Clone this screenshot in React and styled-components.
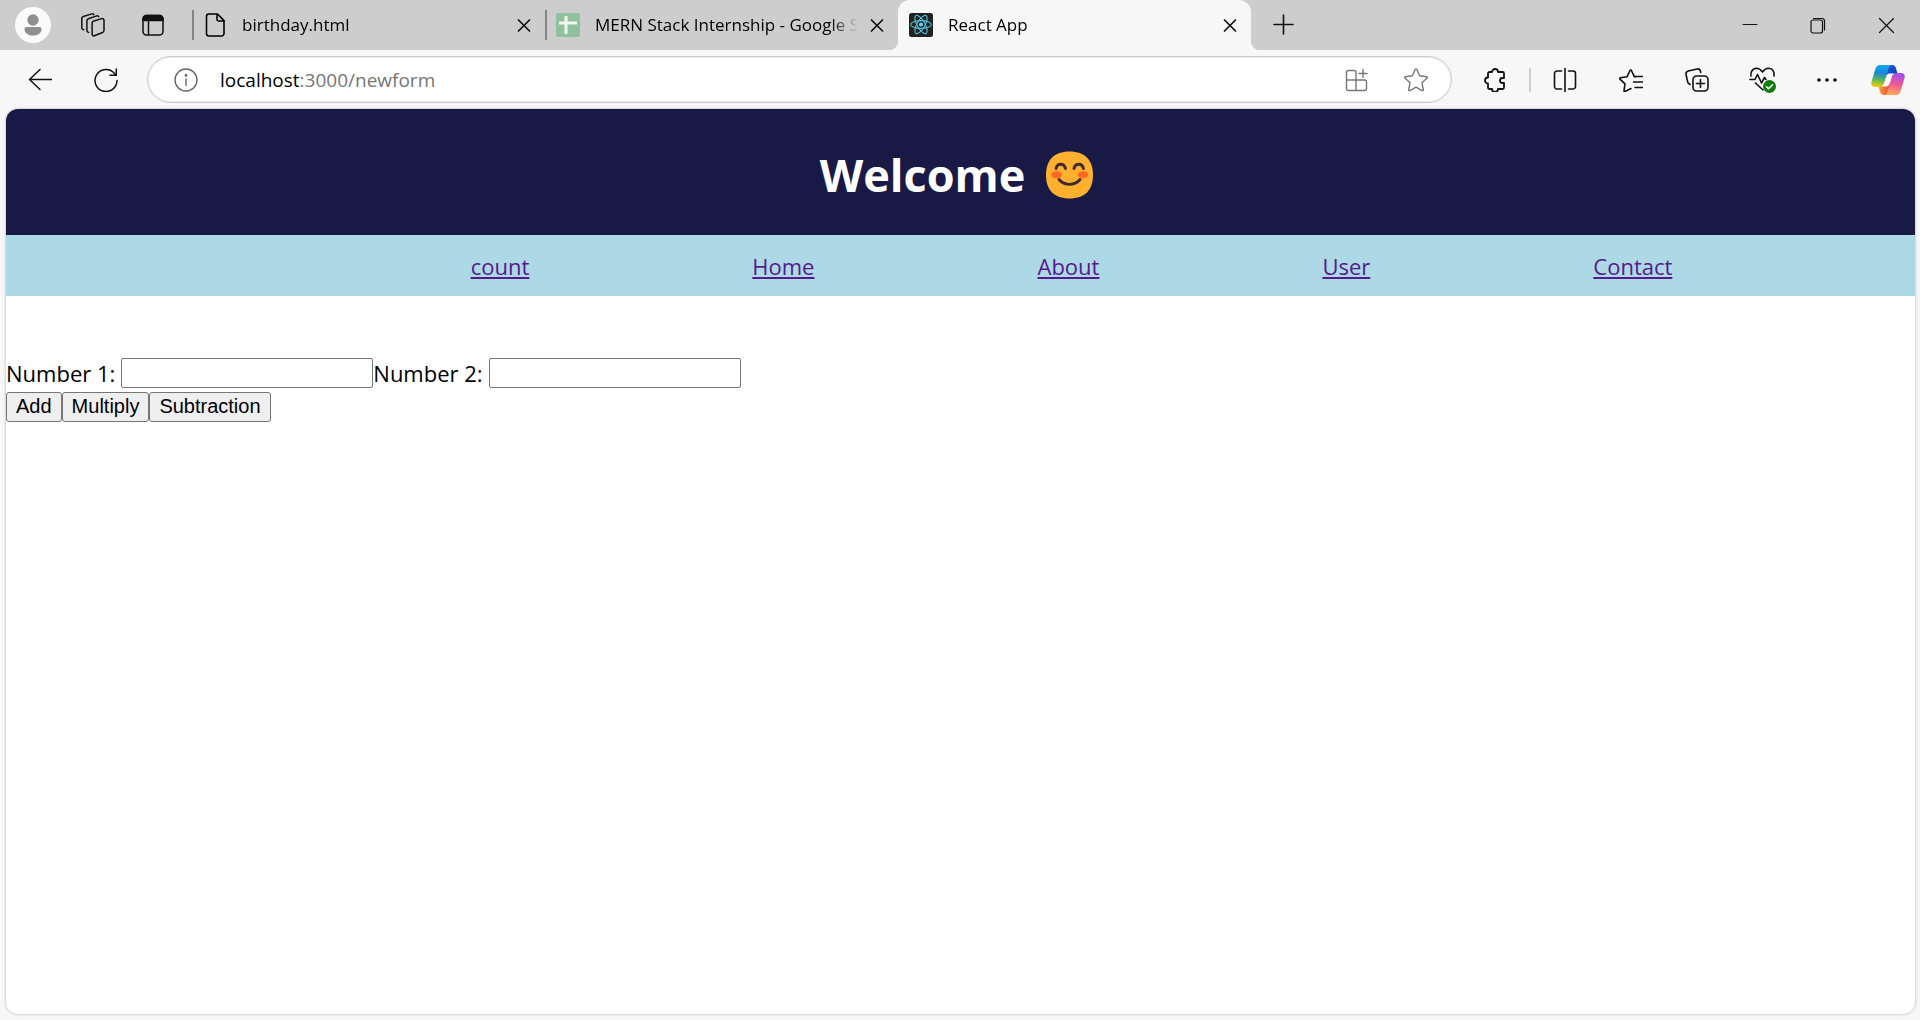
import React, { useState } from "react";
import styled, { createGlobalStyle, css } from "styled-components";

const uiFont = '"Segoe UI", "Open Sans", "Noto Sans", sans-serif';

const GlobalStyle = createGlobalStyle`
  * { box-sizing: border-box; }
  body { margin: 0; background: #f7f7f7; font-family: ${uiFont}; color: #000; }
  button, input { font-family: inherit; }
`;

const Window = styled.div`
  display: flex;
  flex-direction: column;
  min-height: 100vh;
  background: #f7f7f7;
`;

const TabStrip = styled.div`
  display: flex;
  height: 50px;
  padding-left: 3px;
  background: #cdcdcd;
`;

const IconButton = styled.button`
  display: flex;
  flex: none;
  align-items: center;
  justify-content: center;
  width: ${(p) => p.$width || 66}px;
  height: 50px;
  padding: 0;
  border: 0;
  background: none;
  color: ${(p) => p.$color || "#111"};
`;

const Tabs = styled.div`
  display: flex;
  flex: 0 1 1059px;
  min-width: 0;
  margin-left: 9px;
`;

const Tab = styled.div`
  position: relative;
  display: flex;
  flex: 1 1 0;
  align-items: center;
  min-width: 0;
  padding-right: 9px;
  ${(p) =>
    p.$active &&
    css`
      background: #f7f7f7;
      border-radius: 12px 12px 0 0;
      &::before,
      &::after {
        content: "";
        position: absolute;
        bottom: 0;
        width: 10px;
        height: 10px;
      }
      &::before {
        left: -10px;
        background: radial-gradient(circle at 0 0, transparent 10px, #f7f7f7 11px);
      }
      &::after {
        right: -10px;
        background: radial-gradient(circle at 100% 0, transparent 10px, #f7f7f7 11px);
      }
    `}
`;

const TabRule = styled.span`
  flex: none;
  width: 2px;
  height: 30px;
  background: ${(p) => (p.$hidden ? "transparent" : "#858585")};
`;

const TabIcon = styled.span`
  display: flex;
  flex: none;
  margin: 0 15px 0 9px;
`;

const TabTitle = styled.span`
  flex: 1;
  min-width: 0;
  margin-right: 7px;
  overflow: hidden;
  font-size: 17px;
  line-height: 50px;
  white-space: nowrap;
  mask-image: linear-gradient(to right, #000 calc(100% - 28px), transparent);
`;

const WindowControls = styled.div`
  display: flex;
  margin-left: auto;
`;

const Toolbar = styled.div`
  display: flex;
  align-items: center;
  height: 59px;
  padding: 0 2px 0 7px;
`;

const AddressBar = styled.div`
  display: flex;
  flex: 1;
  align-items: center;
  min-width: 0;
  height: 47px;
  margin: 0 10px 0 8px;
  padding: 0 6px 0 26px;
  border: 1px solid #cbcbcb;
  border-radius: 24px;
  background: #fff;
  box-shadow: inset 0 0 0 1px #ececec;
`;

const Address = styled.span`
  flex: 1;
  margin-left: 22px;
  font-size: 19px;
  line-height: 28px;
  color: #767676;
`;

const Host = styled.span`
  color: #000;
`;

const ToolRule = styled.span`
  width: 2px;
  height: 24px;
  margin: 0 1px;
  background: #cfcfcf;
`;

const Page = styled.main`
  flex: 1;
  margin: 0 5px 6px 6px;
  overflow: hidden;
  border-radius: 12px;
  background: #fff;
  box-shadow: 0 0 3px rgba(0, 0, 0, 0.3);
`;

const Banner = styled.header`
  display: flex;
  align-items: center;
  justify-content: center;
  height: 126px;
  padding-top: 6px;
  background: #191946;
  color: #fff;
`;

const Welcome = styled.h1`
  display: flex;
  align-items: center;
  gap: 14px;
  margin: 0;
  font-size: 45px;
  line-height: 64px;
  font-weight: 700;
`;

const NavList = styled.ul`
  display: flex;
  justify-content: center;
  gap: 223px;
  margin: 0;
  padding: 15px 0 14px 222px;
  list-style: none;
  background: #add8e6;
`;

const NavLink = styled.a`
  display: block;
  font-size: 22px;
  line-height: 32px;
  color: #551a8b;
  text-decoration: underline;
  text-decoration-thickness: 2px;
  text-underline-offset: 2px;
`;

const Form = styled.form`
  padding-top: 60px;
`;

const Row = styled.div`
  display: flex;
  align-items: flex-start;
  height: 34px;
  padding-top: 2px;
`;

const Field = styled.label`
  display: flex;
  align-items: center;
  gap: 6px;
  font-size: 22px;
  line-height: 30px;
  white-space: nowrap;
`;

const NumberInput = styled.input`
  width: 252px;
  height: 30px;
  padding: 2px;
  border: 1px solid #767676;
  border-radius: 2px;
  background: #fff;
  font-size: 20px;
`;

const ActionButton = styled.button`
  height: 30px;
  padding: 0 9px 2px;
  border: 1px solid #767676;
  border-radius: 3px;
  background: #efefef;
  color: #000;
  font-family: Arial, "Liberation Sans", sans-serif;
  font-size: 20px;
`;

function Icon({ size = 24, w = 1.5, children }) {
  return (
    <svg width={size} height={size} viewBox={`0 0 ${size} ${size}`} fill="none" stroke="currentColor" strokeWidth={w} strokeLinecap="round" strokeLinejoin="round" aria-hidden="true">
      {children}
    </svg>
  );
}

const AvatarIcon = () => (
  <svg width="36" height="36" viewBox="0 0 36 36" aria-hidden="true">
    <circle cx="18" cy="18" r="18" fill="#fafafa" />
    <circle cx="18" cy="13" r="5.7" fill="#8f8f8f" />
    <path d="M11.5 20h13a2 2 0 0 1 2 2c0 4-3.5 6.500-8.500 6.500S9.500 26 9.500 22a2 2 0 0 1 2-2z" fill="#8f8f8f" />
  </svg>
);

const WorkspacesIcon = () => (
  <Icon>
    <path d="M12 8.300l8.800-2.700a1.700 1.700 0 0 1 2.200 1.700v10.200a2.300 2.300 0 0 1-1.400 2l-8.300 3.300a1.600 1.600 0 0 1-2.200-1.500V10a2 2 0 0 1 .9-1.700z" />
    <path d="M7.600 19.400l-.7-.3a1.700 1.700 0 0 1-1-1.500V7.800a2.300 2.300 0 0 1 1.500-2.100l8.300-2.800a1.600 1.600 0 0 1 2 .9" />
    <path d="M2.700 16.800l-.9-.4a1.700 1.700 0 0 1-1-1.500V5.600a2.300 2.300 0 0 1 1.500-2.100L10.800.9a1.600 1.600 0 0 1 2 .8" />
  </Icon>
);

const PanelIcon = () => (
  <Icon>
    <rect x="2" y="2.500" width="20" height="19.500" rx="3.500" />
    <path d="M2 7.500V6a3.500 3.500 0 0 1 3.500-3.500h13A3.500 3.500 0 0 1 22 6v1.500z" fill="currentColor" />
    <path d="M7.500 8v14" />
  </Icon>
);

const FileIcon = () => (
  <Icon w={1.6}>
    <path d="M6 1h8.500L21 7.600V20.500a2.500 2.500 0 0 1-2.500 2.500H6a2.500 2.500 0 0 1-2.500-2.500v-17A2.500 2.500 0 0 1 6 1z" />
    <path d="M14 1.300V6a2 2 0 0 0 2 2h4.800" />
  </Icon>
);

const SheetIcon = () => (
  <svg width="24" height="24" viewBox="0 0 24 24" aria-hidden="true">
    <rect width="24" height="24" rx="2.500" fill="#8fc29c" />
    <path d="M3 10h18M10 3v18" stroke="#f2f5f2" strokeWidth="3" />
  </svg>
);

const ReactIcon = () => (
  <svg width="24" height="24" viewBox="0 0 24 24" aria-hidden="true">
    <rect width="24" height="24" rx="2.500" fill="#222" />
    <g fill="none" stroke="#53c1de" strokeWidth="1.100">
      <ellipse cx="12" cy="11.500" rx="10.300" ry="3.900" />
      <ellipse cx="12" cy="11.500" rx="10.300" ry="3.900" transform="rotate(60 12 11.500)" />
      <ellipse cx="12" cy="11.500" rx="10.300" ry="3.900" transform="rotate(120 12 11.500)" />
    </g>
    <circle cx="12" cy="11.500" r="2" fill="#61dafb" />
  </svg>
);

const CloseIcon = () => (
  <Icon w={1.7}><path d="M6.500 7l11 11M17.500 7l-11 11" /></Icon>
);
const PlusIcon = () => <Icon w={1.6}><path d="M2 11.500h19M11.500 2v19" /></Icon>;
const MinimizeIcon = () => <Icon w={1}><path d="M5 11.500h14" /></Icon>;
const RestoreIcon = () => (
  <Icon w={1.2}>
    <rect x="5" y="7" width="11.500" height="13" rx="2" />
    <path d="M7.500 5.500h8.500a2.500 2.500 0 0 1 2.500 2.500v9" />
  </Icon>
);
const ExitIcon = () => <Icon w={1.2}><path d="M5.500 5.500l14 14M19.500 5.500l-14 14" /></Icon>;

const BackIcon = () => <Icon><path d="M1.500 11.500h22M12 1.500L1.500 11.500l10.500 10" /></Icon>;
const ReloadIcon = () => (
  <Icon>
    <path d="M23 12.500A11 11 0 1 1 20.500 5.500L22 7" />
    <path d="M22.300 1v6.200H16" />
  </Icon>
);
const InfoIcon = () => (
  <Icon w={1.4}>
    <circle cx="12" cy="12" r="11" />
    <path d="M12 11v6.500" />
    <circle cx="12" cy="7.400" r=".7" fill="currentColor" />
  </Icon>
);
const AppsIcon = () => (
  <Icon w={1.4}>
    <path d="M11 12V4.500a2 2 0 0 0-2-2H3.500a2 2 0 0 0-2 2v16a2 2 0 0 0 2 2h16a2 2 0 0 0 2-2V14a2 2 0 0 0-2-2h-18M11 12v10.500" />
    <path d="M18 1.500v8M14 5.500h8" />
  </Icon>
);
const StarIcon = () => (
  <Icon w={1.4}>
    <path d="M11.200 1.500a.9.9 0 0 1 1.600 0l2.900 6.300 6.900.9c.7.100 1 .9.500 1.400l-5.100 4.700 1.300 6.900c.1.700-.6 1.200-1.200.9L12 19.200l-6.100 3.400c-.6.300-1.300-.2-1.200-.9L6 14.800.9 10.100c-.5-.5-.2-1.300.5-1.400l6.900-.9z" />
  </Icon>
);
const PuzzleIcon = () => (
  <Icon w={1.8}>
    <path d="M9 4a3 3 0 0 1 6 0h4.500A1.500 1.500 0 0 1 21 5.500V10h-1.500a2.500 2.500 0 0 0 0 5H21v4.500a1.500 1.500 0 0 1-1.500 1.500H15a3 3 0 0 1-6 0H6.500A1.500 1.500 0 0 1 5 19.500V15.500a3 3 0 0 1 0-6v-4A1.500 1.500 0 0 1 6.500 4z" />
  </Icon>
);
const SplitIcon = () => (
  <Icon w={1.6}>
    <path d="M8.500 3H4a2.500 2.500 0 0 0-2.500 2.500v13A2.500 2.500 0 0 0 4 21h4.500M15.500 3H20a2.500 2.500 0 0 1 2.500 2.500v13A2.500 2.500 0 0 1 20 21h-4.500M12 0v24" />
  </Icon>
);
const FavoritesIcon = () => (
  <Icon w={1.6}>
    <path d="M12 20.500l-6 3c-.6.300-1.200-.2-1-.8l1-6.900-5-4.700c-.5-.5-.2-1.200.4-1.300l6.600-1 3-6.300a.8.800 0 0 1 1.400 0l3 6.300h1" />
    <path d="M16 8.500h7.500M14.500 14h9M16 19.500h7.500" />
  </Icon>
);
const CollectionsIcon = () => (
  <Icon w={1.6}>
    <rect x="8" y="8" width="15" height="15" rx="3.500" />
    <path d="M15.500 11.500v8M11.500 15.500h8" />
    <path d="M5 16.500l-1.200-.9a3 3 0 0 1-1.200-2L1 6.300A3 3 0 0 1 3.300 3L12 1a3 3 0 0 1 3.500 2.200l.2 1.300" />
  </Icon>
);
const HealthIcon = () => (
  <svg width="28" height="28" viewBox="0 0 28 28" fill="none" stroke="currentColor" strokeWidth="1.600" strokeLinecap="round" strokeLinejoin="round" aria-hidden="true">
    <path d="M2 10c-.6-3 .8-7.500 5.500-7.700 3 0 4.500 1.700 6 3.700 1.500-2 3-3.700 6-3.700 4.500.2 6.300 4.200 5.500 7.700M6.500 17l7.500 7" />
    <path d="M1 13.500H6l2.500-5 4 8.500 3-5.500 1.500 2" />
    <circle cx="20.500" cy="20.500" r="6.500" fill="#107c10" stroke="none" />
    <path d="M17.500 20.800l2 2 4-4" stroke="#fff" />
  </svg>
);
const MoreIcon = () => (
  <svg width="24" height="24" viewBox="0 0 24 24" fill="currentColor" aria-hidden="true">
    <circle cx="4" cy="12" r="1.800" />
    <circle cx="12" cy="12" r="1.800" />
    <circle cx="20" cy="12" r="1.800" />
  </svg>
);
const CopilotIcon = () => (
  <svg width="34" height="32" viewBox="0 0 34 32" aria-hidden="true">
    <defs>
      <linearGradient id="cpLeft" x1=".4" y1="0" x2=".3" y2="1">
        <stop offset="0" stopColor="#16a5f0" />
        <stop offset=".35" stopColor="#1687d8" />
        <stop offset=".65" stopColor="#57b263" />
        <stop offset="1" stopColor="#f5d000" />
      </linearGradient>
      <linearGradient id="cpRight" x1=".6" y1="0" x2=".4" y2="1">
        <stop offset="0" stopColor="#a04bf0" />
        <stop offset=".5" stopColor="#ee5a98" />
        <stop offset="1" stopColor="#ffad52" />
      </linearGradient>
      <linearGradient id="cpTop" x1="0" y1="0" x2="1" y2="1">
        <stop offset="0" stopColor="#1b5fd9" />
        <stop offset="1" stopColor="#0a35b8" />
      </linearGradient>
      <linearGradient id="cpBottom" x1="0" y1="0" x2="1" y2="0">
        <stop offset="0" stopColor="#fba22c" />
        <stop offset="1" stopColor="#e8464d" />
      </linearGradient>
    </defs>
    <path d="M16 1h5c2.500 0 3.500 1.500 4.200 4l1.300 5h-8.500l-3 4z" fill="url(#cpTop)" />
    <path d="M18 31h-5c-2.500 0-3.500-1.500-4.200-4l-1.300-5H16l3-4z" fill="url(#cpBottom)" />
    <path d="M9 1h12c-2 0-3 1.500-3.700 4l-3.600 13c-.9 3.200-2.500 5-5.500 5H4C.7 23-.3 20.500.6 17.500L4 6C5 2.700 6.500 1 9 1z" fill="url(#cpLeft)" />
    <path d="M25 31H13c2 0 3-1.500 3.700-4l3.600-13c.9-3.200 2.500-5 5.500-5H30c3.300 0 4.300 2.500 3.400 5.500L30 26c-1 3.300-2.500 5-5 5z" fill="url(#cpRight)" />
    <path d="M18 9.500h5.500c-2 .7-2.800 2.500-3.400 4.500l-1.600 5.500c-.7 2.300-1.800 3-3.500 3h-4.500c2-.7 2.700-2.500 3.200-4.500l1.600-5.500c.5-1.700 1.200-2.700 2.700-3z" fill="#fff" />
  </svg>
);

const SmileEmoji = () => (
  <svg width="62" height="48" viewBox="0 0 62 48" role="img" aria-label="smiling face">
    <path d="M30.500 .5C46 .5 54 9 54 24S46 47.500 30.500 47.500 7 39 7 24 15 .5 30.500 .5z" fill="#ffb02e" />
    <ellipse cx="17.500" cy="23.800" rx="5.200" ry="3.600" fill="#ff6723" />
    <ellipse cx="44" cy="23.800" rx="5.200" ry="3.600" fill="#ff6723" />
    <g fill="none" stroke="#402a32" strokeWidth="2.900" strokeLinecap="round">
      <path d="M17 17.500c1.500-5.600 8-5.600 9.500 0M35 17.500c1.500-5.600 8-5.600 9.500 0M20 28.500c5.500 6.500 15.500 6.500 21 0" />
    </g>
  </svg>
);

const tabs = [
  { title: "birthday.html", icon: <FileIcon /> },
  { title: "MERN Stack Internship - Google Sheets", icon: <SheetIcon /> },
  { title: "React App", icon: <ReactIcon />, active: true },
];

const links = ["count", "Home", "About", "User", "Contact"];

const tools = [
  ["Split screen", <SplitIcon />, 66],
  ["Favorites", <FavoritesIcon />, 66],
  ["Collections", <CollectionsIcon />, 66],
  ["Browser essentials", <HealthIcon />, 66],
  ["More", <MoreIcon />, 61],
  ["Copilot", <CopilotIcon />, 61],
];

export default function App() {
  const [first, setFirst] = useState("");
  const [second, setSecond] = useState("");

  return (
    <Window>
      <GlobalStyle />
      <TabStrip>
        <IconButton $width={60} aria-label="Profile"><AvatarIcon /></IconButton>
        <IconButton $width={60} aria-label="Workspaces"><WorkspacesIcon /></IconButton>
        <IconButton $width={60} aria-label="Tab actions"><PanelIcon /></IconButton>
        <Tabs>
          {tabs.map((tab) => (
            <Tab key={tab.title} $active={tab.active}>
              <TabRule $hidden={tab.active} />
              <TabIcon>{tab.icon}</TabIcon>
              <TabTitle>{tab.title}</TabTitle>
              <IconButton $width={24} aria-label={`Close ${tab.title}`}><CloseIcon /></IconButton>
            </Tab>
          ))}
        </Tabs>
        <IconButton aria-label="New tab"><PlusIcon /></IconButton>
        <WindowControls>
          <IconButton $width={68} aria-label="Minimize"><MinimizeIcon /></IconButton>
          <IconButton $width={68} aria-label="Restore"><RestoreIcon /></IconButton>
          <IconButton $width={68} aria-label="Close window"><ExitIcon /></IconButton>
        </WindowControls>
      </TabStrip>

      <Toolbar>
        <IconButton aria-label="Back"><BackIcon /></IconButton>
        <IconButton aria-label="Reload"><ReloadIcon /></IconButton>
        <AddressBar>
          <IconButton $width={24} $color="#666" aria-label="Site information"><InfoIcon /></IconButton>
          <Address><Host>localhost</Host>:3000/newform</Address>
          <IconButton $width={59} $color="#777" aria-label="Apps"><AppsIcon /></IconButton>
          <IconButton $width={59} $color="#777" aria-label="Add to favorites"><StarIcon /></IconButton>
        </AddressBar>
        <IconButton aria-label="Extensions"><PuzzleIcon /></IconButton>
        <ToolRule />
        {tools.map(([label, icon, width]) => (
          <IconButton key={label} $width={width} aria-label={label}>{icon}</IconButton>
        ))}
      </Toolbar>

      <Page>
        <Banner>
          <Welcome>Welcome <SmileEmoji /></Welcome>
        </Banner>
        <nav>
          <NavList>
            {links.map((name) => (
              <li key={name}><NavLink href={`#${name.toLowerCase()}`}>{name}</NavLink></li>
            ))}
          </NavList>
        </nav>
        <Form onSubmit={(e) => e.preventDefault()}>
          <Row>
            <Field>Number 1: <NumberInput value={first} onChange={(e) => setFirst(e.target.value)} /></Field>
            <Field>Number 2: <NumberInput value={second} onChange={(e) => setSecond(e.target.value)} /></Field>
          </Row>
          <Row>
            <ActionButton type="button">Add</ActionButton>
            <ActionButton type="button">Multiply</ActionButton>
            <ActionButton type="button">Subtraction</ActionButton>
          </Row>
        </Form>
      </Page>
    </Window>
  );
}
